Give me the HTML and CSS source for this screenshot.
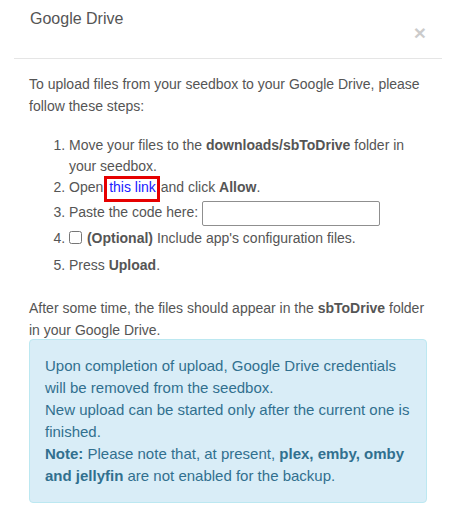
FILE: index.html
```html
<!DOCTYPE html>
<html lang="en">
<head>
<meta charset="utf-8">
<title>Google Drive</title>
<link rel="stylesheet" href="styles.css">
</head>
<body>
<div class="modal">
  <div class="modal-header">
    <h4 class="modal-title">Google Drive</h4>
    <div class="close-row"><button class="close" type="button">×</button></div>
  </div>
  <div class="modal-body">
    <p class="intro">To upload files from your seedbox to your Google Drive, please follow these steps:</p>
    <ol class="steps">
      <li>Move your files to the <b>downloads/sbToDrive</b> folder in your seedbox.</li>
      <li>Open <a class="link" href="#">this link</a> and click <b>Allow</b>.</li>
      <li class="code-step">Paste the code here: <input class="code-input" type="text"></li>
      <li class="check-step"><input class="check" type="checkbox"> <b>(Optional)</b> Include app's configuration files.</li>
      <li>Press <b>Upload</b>.</li>
    </ol>
    <p class="outro">After some time, the files should appear in the <b>sbToDrive</b> folder in your Google Drive.</p>
    <div class="alert">
      Upon completion of upload, Google Drive credentials will be removed from the seedbox.<br>
      New upload can be started only after the current one is finished.<br>
      <b>Note:</b> Please note that, at present, <b>plex, emby, omby and jellyfin</b> are not enabled for the backup.
    </div>
  </div>
</div>
</body>
</html>
```
FILE: styles.css
```css
html, body {
  margin: 0;
  padding: 0;
  background: #fff;
}
body {
  font-family: "Liberation Sans", Arial, sans-serif;
  font-size: 14px;
  color: #555;
}
.modal {
  margin: 0 20px 0 14px;
  width: 428px;
}
.modal-header {
  padding: 8px 15px 0 16px;
  height: 50px;
  border-bottom: 1px solid #e5e5e5;
}
.modal-title {
  margin: 0;
  font-size: 16px;
  font-weight: normal;
  line-height: 22px;
  color: #555;
}
.close-row {
  display: flex;
  justify-content: flex-end;
  margin-top: -8px;
}
.close {
  border: 0;
  background: transparent;
  padding: 0 1px 0 0;
  font-family: "Liberation Sans", Arial, sans-serif;
  font-size: 21px;
  font-weight: bold;
  line-height: 21px;
  color: #000;
  opacity: 0.2;
}
.modal-body {
  padding: 15px;
}
.intro {
  margin: 0 0 18px;
  line-height: 21.7px;
}
.steps {
  margin: 0 0 22px;
  padding-left: 40px;
  line-height: 21px;
}
.steps b, .outro b {
  color: #555;
}
.link {
  color: #2020ff;
  text-decoration: none;
  padding: 0 1px 4px 2px;
  outline: 3px solid #e60000;
  outline-offset: 0;
}
.code-step {
  line-height: 28px;
}
.code-input {
  width: 178px;
  height: 25px;
  box-sizing: border-box;
  border: 1px solid #8f8f8f;
  border-radius: 2px;
  margin: 0;
  padding: 0 4px;
  vertical-align: middle;
  font: inherit;
}
.check-step {
  line-height: 25px;
  margin-bottom: 4px;
}
.check {
  width: 13px;
  height: 13px;
  margin: 0 1px 0 0;
  vertical-align: -1px;
}
.outro {
  margin: 0;
  line-height: 21.4px;
}
.alert {
  margin-top: -2px;
  background: #d9edf7;
  border: 1px solid #bce8f1;
  border-radius: 4px;
  color: #31708f;
  padding: 15px;
  font-size: 15px;
  line-height: 21.9px;
}
```
